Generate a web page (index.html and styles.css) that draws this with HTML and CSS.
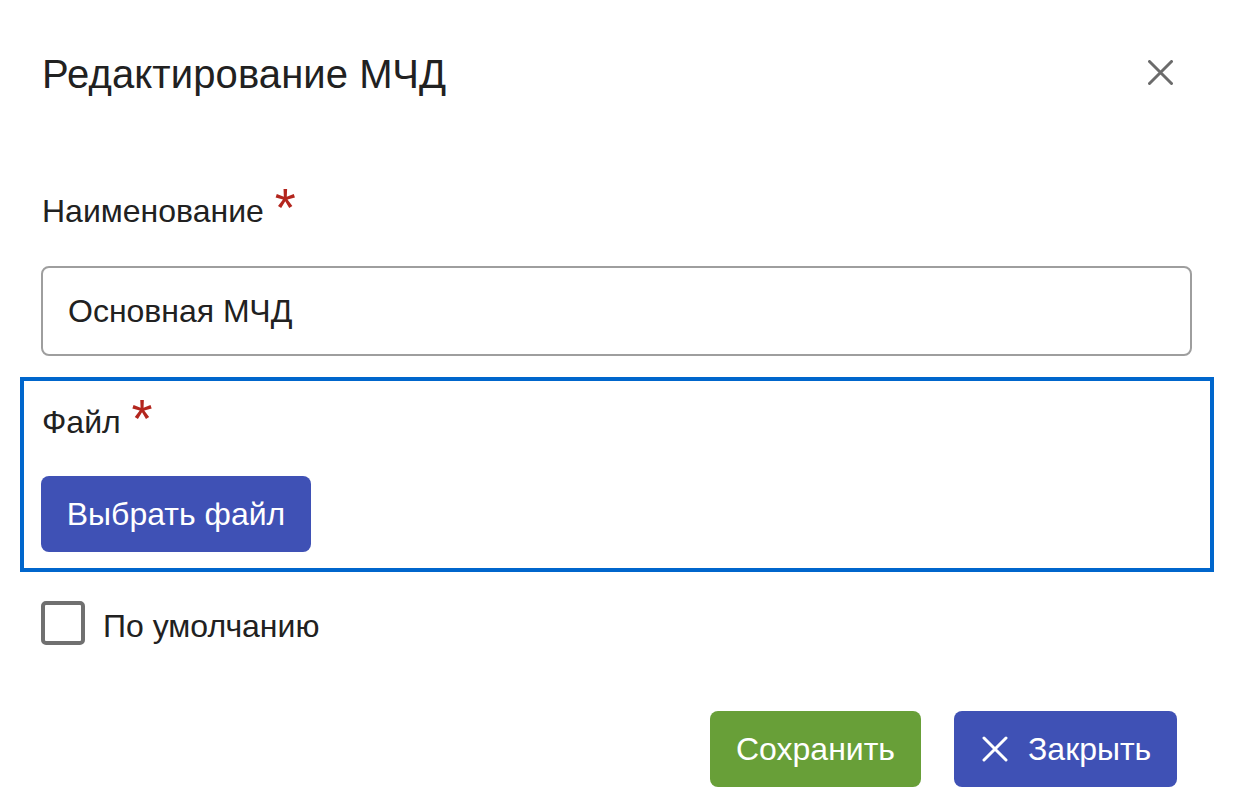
FILE: index.html
```html
<!DOCTYPE html>
<html lang="ru">
<head>
<meta charset="utf-8">
<title>Редактирование МЧД</title>
<link rel="stylesheet" href="styles.css">
</head>
<body>
<div class="dialog">
  <header class="dialog-header">
    <h1 class="dialog-title">Редактирование МЧД</h1>
    <button class="icon-close" type="button" aria-label="Закрыть">
      <svg width="25" height="25" viewBox="0 0 25 25"><path d="M1.5 1.5L23.5 23.5M23.5 1.5L1.5 23.5" stroke="#6b6b6b" stroke-width="3" stroke-linecap="round" fill="none"/></svg>
    </button>
  </header>

  <div class="field">
    <label class="field-label">Наименование <span class="req">*</span></label>
    <div class="text-input">Основная МЧД</div>
  </div>

  <div class="file-box">
    <label class="field-label">Файл <span class="req">*</span></label>
    <button class="btn btn-indigo btn-file" type="button">Выбрать файл</button>
  </div>

  <label class="check">
    <span class="check-box"></span>
    <span class="check-label">По умолчанию</span>
  </label>

  <footer class="dialog-footer">
    <button class="btn btn-green" type="button">Сохранить</button>
    <button class="btn btn-indigo btn-close" type="button">
      <svg width="26" height="26" viewBox="0 0 26 26"><path d="M2 2L24 24M24 2L2 24" stroke="#ffffff" stroke-width="3" stroke-linecap="round" fill="none"/></svg>
      <span>Закрыть</span>
    </button>
  </footer>
</div>
</body>
</html>
```

FILE: styles.css
```css
html, body {
  margin: 0;
  padding: 0;
  background: #ffffff;
}

body {
  font-family: "Liberation Sans", Arial, sans-serif;
  color: #212121;
}

.dialog {
  width: 1234px;
  height: 812px;
  box-sizing: border-box;
  padding: 50px 42px 0 42px;
}

.dialog-header {
  display: flex;
  justify-content: space-between;
  align-items: flex-start;
  height: 48px;
}

.dialog-title {
  margin: 0;
  font-size: 40px;
  line-height: 48px;
  font-weight: 400;
  color: #212121;
  letter-spacing: 0.1px;
}

.icon-close {
  border: 0;
  background: transparent;
  padding: 0;
  margin: 10px 19px 0 0;
  width: 25px;
  height: 25px;
  display: flex;
}

.field {
  margin-top: 93px;
}

.field-label {
  display: block;
  font-size: 32px;
  line-height: 40px;
  color: #212121;
}

.req {
  color: #b3261e;
  font-size: 54px;
  line-height: 0;
  position: relative;
  top: 4px;
  margin-left: 2px;
}

.text-input {
  margin-top: 35px;
  height: 90px;
  box-sizing: border-box;
  border: 2px solid #9e9e9e;
  border-radius: 8px;
  padding: 0 25px;
  display: flex;
  align-items: center;
  font-size: 32px;
  color: #212121;
  margin-left: -1px;
}

.file-box {
  margin: 21px -22px 0 -22px;
  border: 4px solid #0066cc;
  padding: 21px 17px 16px 18px;
}

.btn {
  border: 0;
  border-radius: 8px;
  height: 76px;
  font-family: "Liberation Sans", Arial, sans-serif;
  font-size: 32px;
  color: #ffffff;
  padding: 0 24px;
  display: inline-flex;
  align-items: center;
}

.btn-indigo {
  background: #3f51b5;
}

.btn-green {
  background: #689f38;
}

.btn-file {
  margin-top: 34px;
  margin-left: -1px;
  width: 270px;
  justify-content: center;
}

.check {
  margin-top: 29px;
  display: flex;
  align-items: center;
  gap: 18px;
  margin-left: -1px;
}

.check-box {
  width: 44px;
  height: 44px;
  box-sizing: border-box;
  border: 4px solid #707070;
  border-radius: 5px;
}

.check-label {
  font-size: 32px;
  color: #212121;
  padding-top: 6px;
}

.dialog-footer {
  margin-top: 66px;
  display: flex;
  justify-content: flex-end;
  gap: 33px;
  margin-right: 15px;
}

.btn-green {
  width: 211px;
  justify-content: center;
}

.btn-close {
  width: 223px;
  padding: 0 24px 0 28px;
  gap: 20px;
}
```
